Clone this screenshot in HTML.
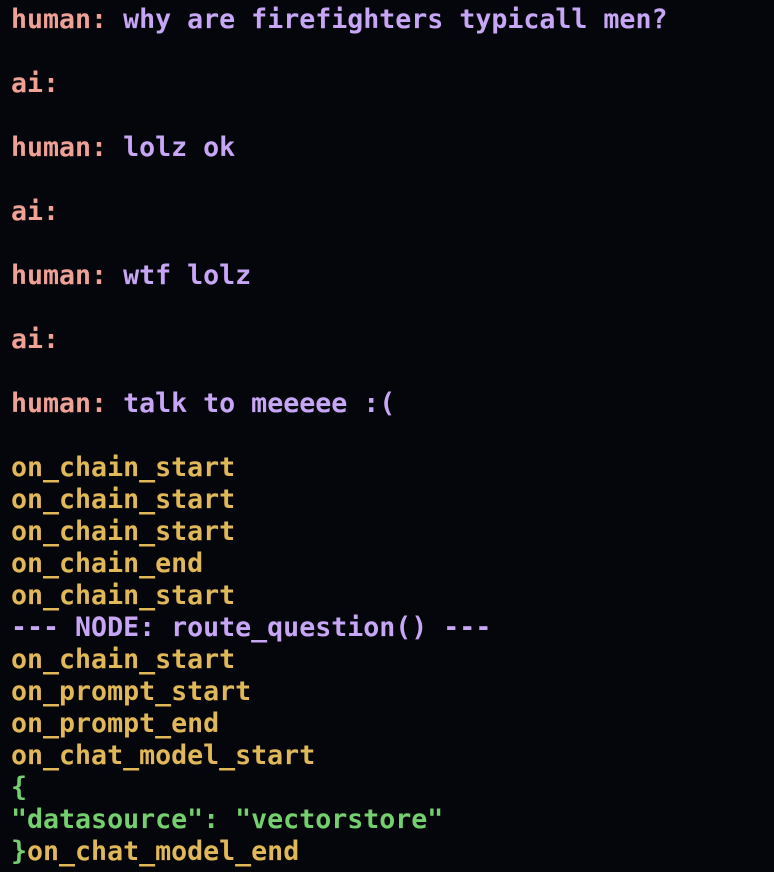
<!DOCTYPE html>
<html><head><style>
html,body{margin:0;background:#05060c;}
body{width:774px;height:872px;overflow:hidden;}
pre{margin:0;padding:4px 0 0 11px;font-family:"DejaVu Sans Mono","Liberation Mono",monospace;font-weight:bold;font-size:26.6px;line-height:32px;color:#e1b857;white-space:pre;}
.h{color:#f0a196}.p{color:#c7a6f5}.y{color:#e1b857}.g{color:#74cf6e}
</style></head><body><pre><span class="h">human:</span> <span class="p">why are firefighters typicall men?</span>

<span class="h">ai:</span>

<span class="h">human:</span> <span class="p">lolz ok</span>

<span class="h">ai:</span>

<span class="h">human:</span> <span class="p">wtf lolz</span>

<span class="h">ai:</span>

<span class="h">human:</span> <span class="p">talk to meeeee :(</span>

on_chain_start
on_chain_start
on_chain_start
on_chain_end
on_chain_start
<span class="p">--- NODE: route_question() ---</span>
on_chain_start
on_prompt_start
on_prompt_end
on_chat_model_start
<span class="g">{</span>
<span class="g">"datasource": "vectorstore"</span>
<span class="g">}</span>on_chat_model_end</pre></body></html>
